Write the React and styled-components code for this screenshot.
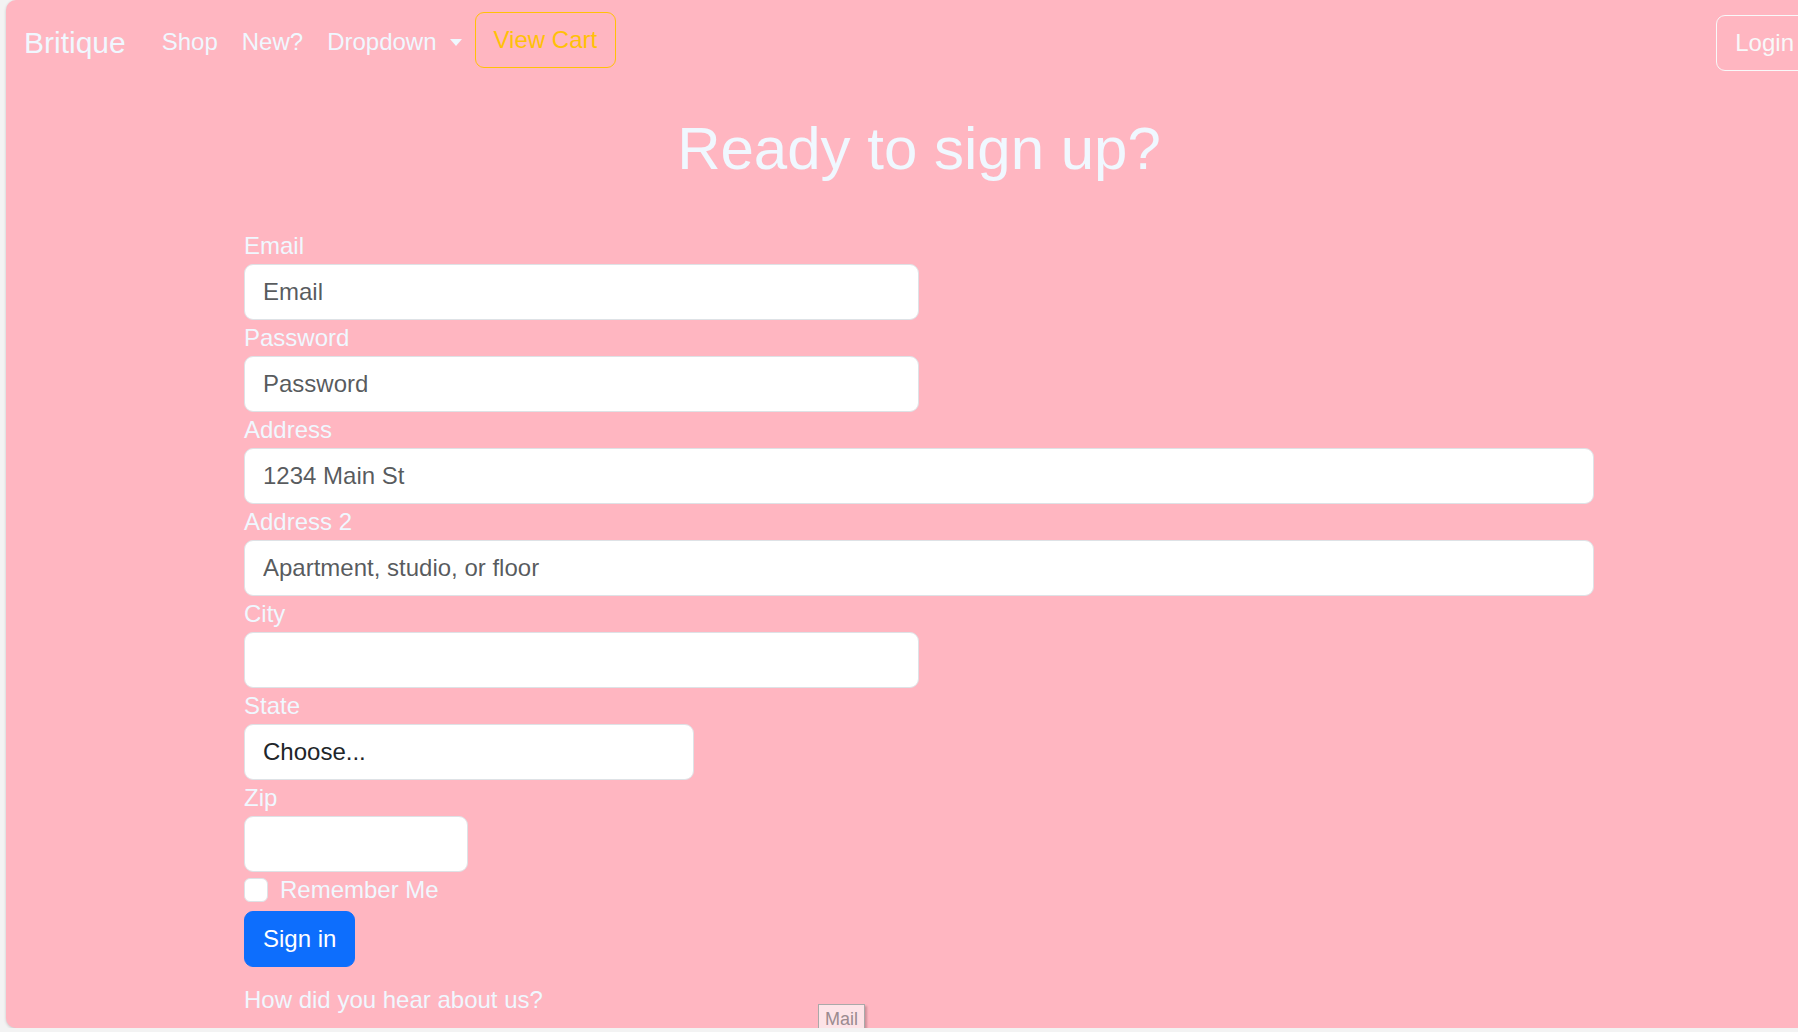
import React from "react";
import styled, { createGlobalStyle } from "styled-components";

const GlobalStyle = createGlobalStyle`
  * { box-sizing: border-box; }
  html, body { margin: 0; padding: 0; overflow: hidden; background: #f3f3f3; }
  body { font-family: "Liberation Sans", Arial, sans-serif; }
`;

const Frame = styled.div`
  position: relative;
  margin-left: 6px;
  width: 1826px;
  height: 1028px;
  background: #ffb6c1;
  border-radius: 10px;
  box-shadow: 0 1px 3px rgba(0, 0, 0, 0.18);
`;

const Nav = styled.nav`
  display: flex;
  align-items: center;
  height: 80px;
  padding: 14px 19px 10px 18px;
`;

const Brand = styled.a`
  font-size: 30px;
  line-height: 45px;
  color: aliceblue;
  text-decoration: none;
  margin-right: 24px;
`;

const NavLink = styled.a`
  display: flex;
  align-items: center;
  padding: 0 12px;
  font-size: 24px;
  line-height: 36px;
  color: aliceblue;
  text-decoration: none;
`;

const Caret = styled.span`
  display: inline-block;
  margin-left: 13px;
  border-top: 7px solid aliceblue;
  border-left: 6px solid transparent;
  border-right: 6px solid transparent;
`;

const OutlineButton = styled.button`
  margin: ${(p) => (p.$push ? "1px 0 0 auto" : "-4px 0 0 1px")};
  padding: 9px 18px;
  border: 1px solid ${(p) => p.$color};
  border-radius: 9px;
  background: transparent;
  color: ${(p) => p.$color};
  font: 24px/36px "Liberation Sans", Arial, sans-serif;
  white-space: nowrap;
`;

const Title = styled.h1`
  margin: 33px 0 43px;
  text-align: center;
  font-size: 60px;
  line-height: 72px;
  font-weight: 400;
  color: aliceblue;
`;

const Form = styled.form`
  width: 1350px;
  margin: 0 auto;
`;

const Field = styled.div`
  width: ${(p) => p.$width};
`;

const Label = styled.label`
  display: block;
  font-size: 24px;
  line-height: 36px;
  color: aliceblue;
  margin-top: ${(p) => p.$gap || 0}px;
`;

const Input = styled.input`
  display: block;
  width: 100%;
  height: 56px;
  padding: 9px 18px;
  border: 1px solid #dee2e6;
  border-radius: 9px;
  background: #fff;
  color: #212529;
  font: 24px/36px "Liberation Sans", Arial, sans-serif;
  outline: none;

  &::placeholder {
    color: rgba(33, 37, 41, 0.75);
  }
`;

const Select = styled.select`
  display: block;
  width: 100%;
  height: 56px;
  padding: 9px 18px;
  border: 1px solid #dee2e6;
  border-radius: 9px;
  background: #fff;
  color: #212529;
  font: 24px/36px "Liberation Sans", Arial, sans-serif;
  appearance: none;
  outline: none;
`;

const CheckRow = styled.div`
  display: flex;
  align-items: flex-start;
  height: 36px;
  margin-bottom: 3px;
`;

const Check = styled.input`
  appearance: none;
  width: 24px;
  height: 24px;
  margin: 6px 12px 0 0;
  background: #fff;
  border: 1px solid #dee2e6;
  border-radius: 6px;
`;

const CheckLabel = styled.label`
  font-size: 24px;
  line-height: 36px;
  color: aliceblue;
`;

const PrimaryButton = styled.button`
  padding: 9px 18px;
  border: 1px solid #0d6efd;
  border-radius: 9px;
  background: #0d6efd;
  color: #fff;
  font: 24px/36px "Liberation Sans", Arial, sans-serif;
`;

const Tip = styled.div`
  position: absolute;
  left: 812px;
  top: 1004px;
  padding: 3px 6px 4px;
  border: 1px solid #a9a9a9;
  background: #fde3e7;
  color: #9b8b90;
  font-size: 18px;
  line-height: 22px;
  box-shadow: 2px 2px 2px rgba(0, 0, 0, 0.2);
`;

const fields = [
  { label: "Email", width: "50%", placeholder: "Email", type: "email" },
  { label: "Password", width: "50%", placeholder: "Password", type: "password" },
  { label: "Address", width: "100%", placeholder: "1234 Main St" },
  { label: "Address 2", width: "100%", placeholder: "Apartment, studio, or floor" },
  { label: "City", width: "50%" },
];

export default function App() {
  return (
    <>
      <GlobalStyle />
      <Frame>
        <Nav>
          <Brand href="#">Britique</Brand>
          <NavLink href="#">Shop</NavLink>
          <NavLink href="#">New?</NavLink>
          <NavLink href="#">
            Dropdown
            <Caret />
          </NavLink>
          <OutlineButton type="button" $color="#ffc107">
            View Cart
          </OutlineButton>
          <OutlineButton type="button" $color="#f8f9fa" $push>
            Login
          </OutlineButton>
        </Nav>

        <Title>Ready to sign up?</Title>

        <Form onSubmit={(e) => e.preventDefault()}>
          {fields.map((f) => (
            <Field key={f.label} $width={f.width}>
              <Label>{f.label}</Label>
              <Input type={f.type || "text"} placeholder={f.placeholder} />
            </Field>
          ))}
          <Field $width="33.333%">
            <Label>State</Label>
            <Select defaultValue="">
              <option value="">Choose...</option>
              <option>...</option>
            </Select>
          </Field>
          <Field $width="16.6%">
            <Label>Zip</Label>
            <Input type="text" />
          </Field>
          <CheckRow>
            <Check type="checkbox" id="remember" />
            <CheckLabel htmlFor="remember">Remember Me</CheckLabel>
          </CheckRow>
          <PrimaryButton type="submit">Sign in</PrimaryButton>
          <Label $gap={15}>How did you hear about us?</Label>
        </Form>

        <Tip>Mail</Tip>
      </Frame>
    </>
  );
}
